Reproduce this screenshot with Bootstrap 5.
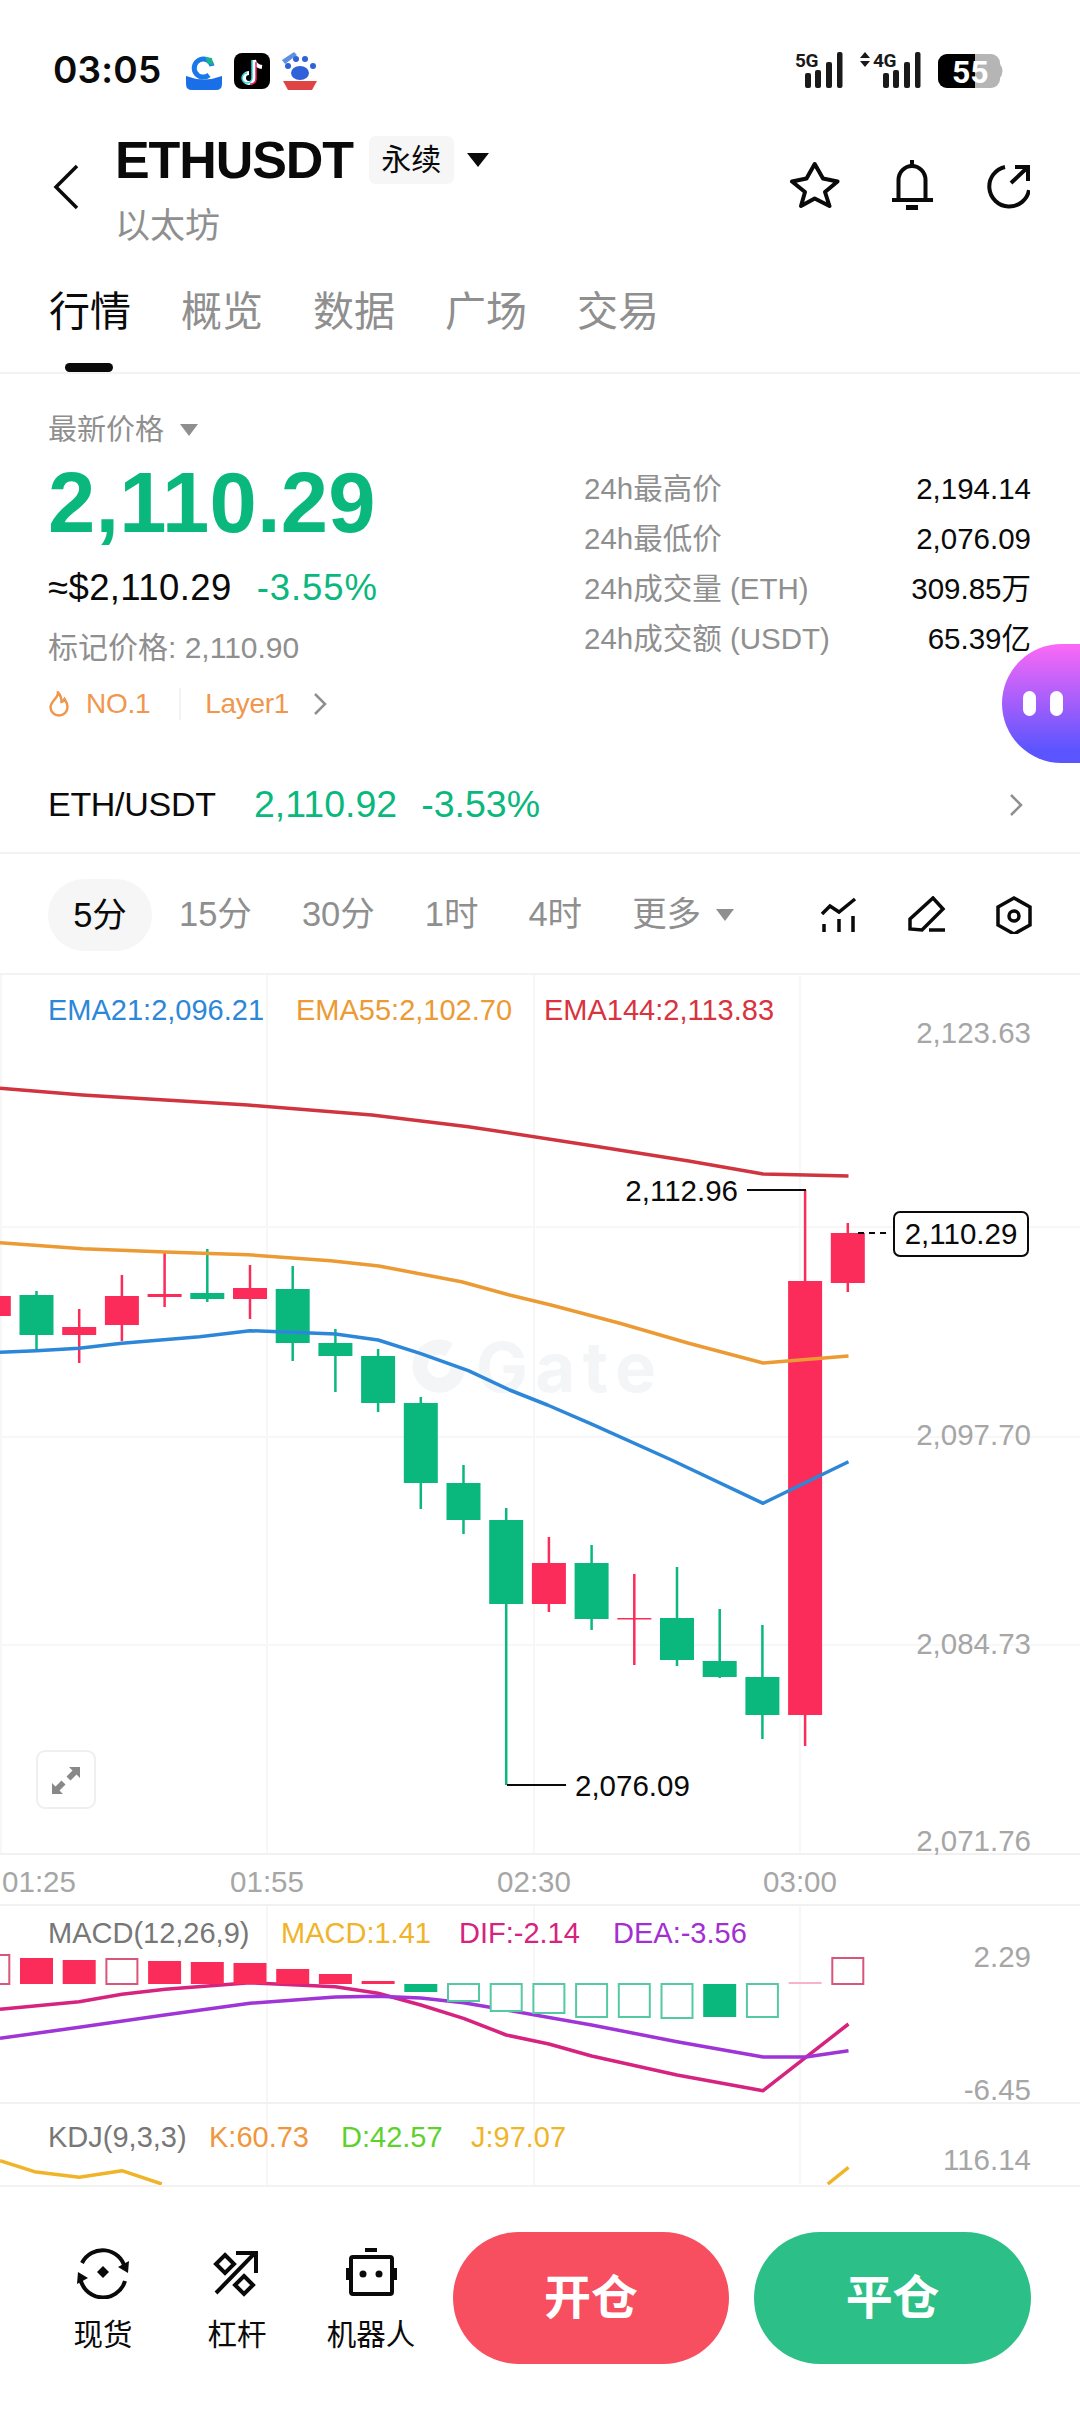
<!DOCTYPE html>
<html lang="en">
<head>
    <meta charset="UTF-8">
    <meta name="viewport" content="width=device-width, initial-scale=1.0">
    <title>ETHUSDT</title>
    <link rel="stylesheet" href="https://cdn.jsdelivr.net/npm/bootstrap@5.3.2/dist/css/bootstrap.min.css">
    <style>
        body { width: 1080px; height: 2412px; overflow: hidden; background: #fff; color: #0a0a0a; position: relative;
               font-family: "Liberation Sans", "Noto Sans CJK SC", sans-serif; }
        svg { display: block; flex: none; }
        .txt-gray { color: #8f8f8f; }
        .txt-green { color: #0ab87e; }

        .status-row { height: 115px; padding: 50px 65px 0 53px; }
        .clock { font: 600 37px/40px Inter, sans-serif; letter-spacing: .2px; width: 133px; }

        .head-row { height: 147px; padding: 0 50px 0 53px; }
        .back-col { width: 62px; padding-top: 49px; }
        .title-col { padding-top: 19px; }
        .pair { font: 700 52px/52px "Liberation Sans", sans-serif; letter-spacing: -1.1px; }
        .perp-tag { background: #f6f6f6; border-radius: 7px; width: 85px; height: 48px; font-size: 30px; line-height: 48px; text-align: center; margin: 0 13px 0 16px; }
        .coin-name { font-size: 35px; line-height: 44px; margin-top: 18px; }
        .head-icons { gap: 51px; padding-top: 45px; }

        .tab-row { height: 112px; gap: 50px; padding: 26px 0 0 49px; border-bottom: 2px solid #f3f3f3; position: relative; }
        .tab-item { font-size: 41px; line-height: 48px; color: #8f8f8f; }
        .tab-on { color: #0a0a0a; position: relative; }
        .tab-on::after { content: ""; position: absolute; left: 16px; top: 75px; width: 48px; height: 9px; border-radius: 5px; background: #0a0a0a; }

        .price-left { width: 584px; padding: 36px 0 0 48px; }
        .price-right { flex: 1; padding: 90px 49px 0 0; }
        .price-label { font-size: 29px; line-height: 40px; }
        .caret-down { width: 0; height: 0; border-left: 9px solid transparent; border-right: 9px solid transparent; border-top: 12px solid #8f8f8f; }
        .last-price { font: 700 85px/90px "Liberation Sans", sans-serif; letter-spacing: .2px; margin-top: 8px; color: #0ab87e; }
        .fiat-row { font-size: 36.500px; line-height: 40px; margin-top: 20px; gap: 25px; letter-spacing: .4px; }
        .fiat-row .txt-green { letter-spacing: .9px; }
        .mark-row { font-size: 30px; line-height: 40px; margin-top: 20px; }
        .tag-row { font-size: 28px; line-height: 40px; margin-top: 16px; color: #f0964d; letter-spacing: -.3px; }
        .tag-line { width: 2px; height: 32px; background: #f4f4f4; margin: 0 24px 0 29px; }
        .stat-row { height: 50px; font-size: 29.500px; line-height: 50px; }

        .spot-row { height: 130px; font-size: 34px; padding: 51px 49px 18px 48px; border-bottom: 2px solid #f3f3f3; letter-spacing: -.3px; }
        .spot-pair { width: 206px; }
        .spot-num { font-size: 37.500px; letter-spacing: 0; }
        .spot-pct { margin-left: 24px; }

        .tf-row { height: 121px; padding: 2px 48px 0; font-size: 34.500px; border-bottom: 2px solid #f3f3f3; gap: 50px; color: #8f8f8f; }
        .tf-on { background: #f6f6f6; color: #0a0a0a; width: 104px; height: 72px; border-radius: 36px; line-height: 72px; text-align: center; margin-right: -23px; }
        .tf-more { gap: 15px; }
        .tf-icons { gap: 50px; }

        #chart text { font-family: "Liberation Sans", sans-serif; font-size: 29px; }
        #chart .ax { fill: #a6a6a6; font-size: 29.500px; }
        #chart .blk { fill: #0a0a0a; font-size: 29.500px; }
        #chart .wm-text { font-family: Inter, sans-serif; font-size: 69px; font-weight: 700; letter-spacing: 7.500px; fill: #f4f5f6; }

        .bar-row { height: 227px; border-top: 2px solid #f3f3f3; padding: 0 49px 0 0; background: #fff; }
        .tool-list { width: 453px; height: 100%; gap: 34px; padding: 58px 0 0 53px; }
        .tool-cell { width: 100px; font-size: 29.500px; line-height: 36px; text-align: center; white-space: nowrap; }
        .tool-cell svg { margin: 0 auto 18px; }
        .act-btn { height: 132px; width: 277px; border-radius: 66px; color: #fff; font-size: 47px; font-weight: 700; line-height: 132px; text-align: center; margin-top: 45px; }
        .act-open { background: #f74e60; }
        .act-close { background: #2dbf88; margin-left: 25px; }

        .float-pet { position: absolute; left: 1002px; top: 644px; width: 78px; height: 119px; border-radius: 60px 0 0 60px / 60px 0 0 60px;
                     background: linear-gradient(180deg, #fb69f6, #5a55ff 90%); gap: 14px; padding-left: 21px; }
        .float-pet i { display: block; width: 13px; height: 25px; border-radius: 7px; background: #fff; }
    </style>
</head>
<body>
    <div class="status-row d-flex align-items-start">
        <div class="clock">03:05</div>
        <svg width="134" height="40" viewBox="186 50 134 40">
            <path d="M186 76q18 7 36 0v8q0 6-6 6h-24q-6 0-6-6z" fill="#1a6fe8"/>
            <path d="M212 66a9 9 0 1 0-3 9" fill="none" stroke="#1a78e8" stroke-width="5"/>
            <path d="M205 57l7 1 1 7-5-1z" fill="#19b38f"/>
            <rect x="234" y="53" width="36" height="36" rx="8" fill="#000"/>
            <path d="M254 60v18a5 5 0 1 1-5-5M254 60q1 6 8 7" fill="none" stroke="#fff" stroke-width="4"/>
            <path d="M252 60v18a5 5 0 1 1-5-5" fill="none" stroke="#25d8e6" stroke-width="1.500"/>
            <path d="M256 62v17a5 5 0 0 1-6 5" fill="none" stroke="#f5215c" stroke-width="1.500"/>
            <path d="M282 60l12-8 3 3-12 9z" fill="#5f8fe0"/>
            <circle cx="288" cy="66" r="3" fill="#2f62d8"/><circle cx="296" cy="59" r="3" fill="#2f62d8"/>
            <circle cx="305" cy="59" r="3" fill="#2f62d8"/><circle cx="313" cy="66" r="3" fill="#2f62d8"/>
            <ellipse cx="300" cy="73" rx="9" ry="7" fill="#2f62d8"/>
            <path d="M283 81h34l-5 9h-24z" fill="#e04545"/>
        </svg>
        <svg class="ms-auto" width="225" height="40" viewBox="790 50 225 40" fill="#1a1a1a">
            <text x="795" y="67" font-family="Roboto, sans-serif" font-weight="700" font-size="19" letter-spacing="-.5">5G</text>
            <rect x="805" y="73" width="6" height="15" rx="2"/><rect x="815" y="70" width="6" height="18" rx="2"/><rect x="826" y="62" width="6" height="26" rx="2"/><rect x="837" y="52" width="5.500" height="36" rx="2"/>
            <path d="M860 58l5-6 5 6zM860 61l5 6 5-6z"/>
            <text x="873" y="67" font-family="Roboto, sans-serif" font-weight="700" font-size="19" letter-spacing="-.5">4G</text>
            <rect x="883" y="73" width="6" height="15" rx="2"/><rect x="893" y="70" width="6" height="18" rx="2"/><rect x="904" y="62" width="6" height="26" rx="2"/><rect x="915" y="52" width="5.500" height="36" rx="2"/>
            <rect x="938" y="54" width="62" height="34" rx="9" fill="#b5b5b5"/>
            <path d="M947 54h28v34h-28a9 9 0 0 1-9-9v-16a9 9 0 0 1 9-9z" fill="#000"/>
            <path d="M1000 64q5 7 0 14z" fill="#b5b5b5"/>
            <text x="952" y="83" fill="#fff" font-family="Roboto, sans-serif" font-weight="700" font-size="32">55</text>
        </svg>
    </div>

    <div class="head-row d-flex">
        <div class="back-col">
            <svg width="26" height="46" viewBox="0 0 26 46"><path d="M24 2 3 23l21 21" fill="none" stroke="#0a0a0a" stroke-width="3.500"/></svg>
        </div>
        <div class="title-col">
            <div class="d-flex align-items-center">
                <span class="pair">ETHUSDT</span>
                <span class="perp-tag">永续</span>
                <svg width="22" height="14" viewBox="0 0 22 14"><path d="M0 0h22L11 14z" fill="#0a0a0a"/></svg>
            </div>
            <div class="coin-name txt-gray">以太坊</div>
        </div>
        <div class="head-icons d-flex ms-auto">
            <svg width="50" height="50" viewBox="0 0 50 50"><path d="M24.700 4l8.300 14.500 14.500 3L35 32l4.500 14-14.800-7.500L11 46l4-14L2 21.500l14.500-3z" fill="none" stroke="#0a0a0a" stroke-width="4" stroke-linejoin="round"/></svg>
            <svg width="42" height="50" viewBox="0 0 42 50" fill="none" stroke="#0a0a0a" stroke-width="4"><path d="M21 0v6"/><path d="M7.500 40V20a13.500 14 0 0 1 27 0v20"/><path d="M1 40h41"/><path d="M15 47.500h12" stroke-width="5"/></svg>
            <svg width="46" height="50" viewBox="0 0 46 50" fill="none" stroke="#0a0a0a" stroke-width="4"><path d="M21 7A20 20 0 1 0 45 30"/><path d="M27 23 44 7M31 7h13v14"/></svg>
        </div>
    </div>

    <div class="tab-row d-flex">
        <span class="tab-item tab-on">行情</span>
        <span class="tab-item">概览</span>
        <span class="tab-item">数据</span>
        <span class="tab-item">广场</span>
        <span class="tab-item">交易</span>
    </div>

    <div class="d-flex">
        <div class="price-left">
            <div class="price-label txt-gray d-flex align-items-center gap-2">最新价格 <span class="caret-down ms-2"></span></div>
            <div class="last-price">2,110.29</div>
            <div class="fiat-row d-flex"><span>≈$2,110.29</span><span class="txt-green">-3.55%</span></div>
            <div class="mark-row txt-gray">标记价格: 2,110.90</div>
            <div class="tag-row d-flex align-items-center">
                <svg class="me-3" width="22" height="26" viewBox="0 0 22 26" fill="none" stroke="#f0964d" stroke-width="2.500"><path d="M10 2c0 5-7 8-7.500 14 0 5 4 8.500 8.500 8.500s8.500-3.500 8.500-8.500c0-3-1-5-3-8-1 2-2 3-3 3 0-3-1-7-3.500-9.500z"/></svg>
                <span>NO.1</span>
                <span class="tag-line"></span>
                <span>Layer1</span>
                <svg class="ms-4" width="14" height="24" viewBox="0 0 14 24"><path d="M2 2l10 10L2 22" fill="none" stroke="#8f8f8f" stroke-width="2.500"/></svg>
            </div>
        </div>
        <div class="price-right">
            <div class="stat-row d-flex justify-content-between"><span class="txt-gray">24h最高价</span><span>2,194.14</span></div>
            <div class="stat-row d-flex justify-content-between"><span class="txt-gray">24h最低价</span><span>2,076.09</span></div>
            <div class="stat-row d-flex justify-content-between"><span class="txt-gray">24h成交量 (ETH)</span><span>309.85万</span></div>
            <div class="stat-row d-flex justify-content-between"><span class="txt-gray">24h成交额 (USDT)</span><span>65.39亿</span></div>
        </div>
    </div>

    <div class="spot-row d-flex align-items-center">
        <span class="spot-pair">ETH/USDT</span>
        <span class="txt-green spot-num">2,110.92</span>
        <span class="txt-green spot-num spot-pct">-3.53%</span>
        <svg class="ms-auto me-2" width="14" height="24" viewBox="0 0 14 24"><path d="M2 2l10 10L2 22" fill="none" stroke="#8f8f8f" stroke-width="2.500"/></svg>
    </div>

    <div class="tf-row d-flex align-items-center">
        <span class="tf-on">5分</span>
        <span>15分</span>
        <span>30分</span>
        <span>1时</span>
        <span>4时</span>
        <span class="tf-more d-flex align-items-center">更多 <span class="caret-down"></span></span>
        <div class="tf-icons d-flex ms-auto">
            <svg width="38" height="38" viewBox="821 895 38 38" fill="none" stroke="#0a0a0a" stroke-width="3.500"><path d="M823 913l8-8 9 6 16-13"/><path d="M825 923v8M840 918v13M854 915v16"/></svg>
            <svg width="38" height="38" viewBox="908 895 38 38" fill="none" stroke="#0a0a0a" stroke-width="3.500"><path d="M910 928v-10l23-21 10 11-21 21zM929 929h16"/></svg>
            <svg width="36" height="38" viewBox="996 895 36 38" fill="none" stroke="#0a0a0a" stroke-width="3.500"><path d="M1014 897l16 9v18l-16 9-16-9v-18z"/><circle cx="1014" cy="915" r="5"/></svg>
        </div>
    </div>

    <svg id="chart" width="1080" height="1210" viewBox="0 975 1080 1210">
        <g stroke="#f7f7f7" stroke-width="2" fill="none">
            <path d="M267 975V1854M534 975V1854M800 975V1854M1 975V1854"/>
            <path d="M0 1227H1080M0 1437H1080M0 1645H1080"/>
            <path d="M267 1906V2185M534 1906V2185M800 1906V2185"/>
        </g>
        <g stroke="#f1f1f1" stroke-width="2" fill="none"><path d="M0 1854H1080M0 1905H1080M0 2103H1080"/></g>

        <path d="M449 1350a19 19 0 1 0 9 17" fill="none" stroke="#f4f5f6" stroke-width="15"/>
        <text class="wm-text" x="476" y="1392">Gate</text>

        <g id="candles"></g>
        <g id="lines" fill="none" stroke-width="3.500" stroke-linejoin="round"></g>
        <g id="hist"></g>

        <g stroke="#0a0a0a" stroke-width="2" fill="none">
            <path d="M747 1190h59"/><path d="M507 1785h59"/><path d="M858 1233h32" stroke-dasharray="6 5"/>
        </g>
        <rect x="894" y="1212" width="134" height="44" rx="6" fill="#fff" stroke="#0a0a0a" stroke-width="2"/>
        <text class="blk" x="961" y="1244" text-anchor="middle">2,110.29</text>
        <text class="blk" x="738" y="1201" text-anchor="end">2,112.96</text>
        <text class="blk" x="575" y="1796">2,076.09</text>

        <text x="48" y="1020" fill="#2d87d9">EMA21:2,096.21</text>
        <text x="296" y="1020" fill="#ec9a33">EMA55:2,102.70</text>
        <text x="544" y="1020" fill="#d8333e">EMA144:2,113.83</text>
        <g text-anchor="end">
            <text class="ax" x="1031" y="1043">2,123.63</text>
            <text class="ax" x="1031" y="1445">2,097.70</text>
            <text class="ax" x="1031" y="1654">2,084.73</text>
            <text class="ax" x="1031" y="1851">2,071.76</text>
            <text class="ax" x="1031" y="1967">2.29</text>
            <text class="ax" x="1031" y="2100">-6.45</text>
            <text class="ax" x="1031" y="2170">116.14</text>
        </g>
        <g text-anchor="middle">
            <text class="ax" x="39" y="1892">01:25</text>
            <text class="ax" x="267" y="1892">01:55</text>
            <text class="ax" x="534" y="1892">02:30</text>
            <text class="ax" x="800" y="1892">03:00</text>
        </g>
        <rect x="37" y="1751" width="58" height="57" rx="8" fill="#fff" stroke="#efefef" stroke-width="2"/>
        <path d="M80 1767h-11l3.500 3.500-6 6 4 4 6-6 3.500 3.500zM52 1794h11l-3.500-3.500 6-6-4-4-6 6-3.500-3.500z" fill="#888"/>

        <text x="48" y="1943" fill="#777">MACD(12,26,9)</text>
        <text x="281" y="1943" fill="#f0b429">MACD:1.41</text>
        <text x="459" y="1943" fill="#d6237f">DIF:-2.14</text>
        <text x="613" y="1943" fill="#a32fd2">DEA:-3.56</text>
        <text x="48" y="2147" fill="#777">KDJ(9,3,3)</text>
        <text x="209" y="2147" fill="#f0963c">K:60.73</text>
        <text x="341" y="2147" fill="#5ed12f">D:42.57</text>
        <text x="471" y="2147" fill="#f0b429">J:97.07</text>
    </svg>

    <div class="float-pet d-flex align-items-center"><i></i><i></i></div>

    <div class="bar-row d-flex">
        <div class="tool-list d-flex">
            <div class="tool-cell">
                <svg width="54" height="54" viewBox="76 2243 54 54" fill="none" stroke="#0a0a0a" stroke-width="4">
                    <path d="M82 2261a23 23 0 0 1 43 5"/><path d="M125 2279a23 23 0 0 1-45-5"/>
                    <path d="M118 2265l10 6 1-12zM88 2276l-10-6-1 12z" fill="#0a0a0a" stroke="none"/>
                    <path d="M103 2264l6 6-6 6-6-6z" fill="#0a0a0a" stroke="none"/>
                </svg>
                现货
            </div>
            <div class="tool-cell">
                <svg width="54" height="54" viewBox="211 2243 54 54" fill="none" stroke="#0a0a0a" stroke-width="4">
                    <path d="M217 2291l39-40M237 2251h20v20"/>
                    <path d="M226 2253l9 9-9 9-9-9zM245 2274l9 9-9 9-9-9z"/>
                </svg>
                杠杆
            </div>
            <div class="tool-cell">
                <svg width="54" height="54" viewBox="346 2243 54 54" fill="#0a0a0a">
                    <rect x="367" y="2246" width="12" height="4"/>
                    <rect x="353" y="2255" width="41" height="37" rx="2" fill="none" stroke="#0a0a0a" stroke-width="4"/>
                    <rect x="348" y="2266" width="3" height="12"/><rect x="396" y="2266" width="3" height="12"/>
                    <circle cx="365" cy="2272" r="3.500"/><circle cx="381" cy="2272" r="3.500"/>
                </svg>
                机器人
            </div>
        </div>
        <div class="act-btn act-open">开仓</div>
        <div class="act-btn act-close">平仓</div>
    </div>

    <script src="https://cdn.jsdelivr.net/npm/bootstrap@5.3.2/dist/js/bootstrap.bundle.min.js"></script>
    <script>
        const GREEN = '#0ab87e', RED = '#fb2c5a', STEP = 42.7, FIRST = 36.5;
        const SVGNS = 'http://www.w3.org/2000/svg';
        const cx = i => FIRST + i * STEP;

        function add(parent, tag, attrs) {
            const el = document.createElementNS(SVGNS, tag);
            for (const k in attrs) el.setAttribute(k, attrs[k]);
            document.getElementById(parent).appendChild(el);
        }

        // colour, wick top, body top, body bottom, wick bottom
        const candles = [
            ['r', 1290, 1296, 1316, 1320],
            ['g', 1291, 1295, 1335, 1351], ['r', 1309, 1327, 1335, 1363], ['r', 1275, 1296, 1325, 1341],
            ['r', 1251, 1294, 1297, 1307], ['g', 1249, 1293, 1299, 1302], ['r', 1265, 1288, 1299, 1319],
            ['g', 1266, 1289, 1343, 1361], ['g', 1329, 1343, 1356, 1392], ['g', 1349, 1356, 1403, 1412],
            ['g', 1397, 1403, 1483, 1509], ['g', 1465, 1483, 1520, 1534], ['g', 1508, 1520, 1604, 1785],
            ['r', 1537, 1563, 1604, 1612], ['g', 1545, 1563, 1619, 1630], ['r', 1574, 1618, 1619.500, 1665],
            ['g', 1567, 1618, 1660, 1666], ['g', 1609, 1661, 1677, 1678], ['g', 1625, 1677, 1715, 1739],
            ['r', 1190, 1281, 1715, 1746], ['r', 1223, 1233, 1283, 1292]
        ];
        candles.forEach((c, n) => {
            const x = cx(n - 1), col = c[0] === 'g' ? GREEN : RED;
            add('candles', 'rect', { x: x - 1.25, y: c[1], width: 2.5, height: c[4] - c[1], fill: col });
            add('candles', 'rect', { x: x - 17, y: c[2], width: 34, height: c[3] - c[2], fill: col });
        });

        const poly = pts => pts.map(p => (p[0] / 1.452).toFixed(1) + ',' + p[1].toFixed(1)).join(' ');
        const z3 = a => a.map(p => [p[0], 960 + p[1] / 3]);
        const z5 = a => a.map(p => [p[0], 1900 + p[1] / 3]);
        const lines = [
            ['#d0343f', z3([[0,385],[120,405],[240,420],[360,435],[540,465],[680,500],[860,557],[1000,603],[1108,642],[1232,648]])],
            ['#ec9a33', z3([[0,848],[120,866],[240,876],[360,884],[480,902],[550,918],[670,965],[740,1005],[800,1035],[900,1090],[1000,1150],[1108,1209],[1232,1188]])],
            ['#2d87d9', z3([[0,1177],[53,1172],[115,1165],[177,1150],[290,1130],[363,1112],[487,1122],[549,1140],[610,1180],[680,1232],[740,1290],[795,1335],[860,1393],[975,1500],[1108,1630],[1232,1505]])],
            ['#d6237f', z5([[0,328],[115,305],[177,283],[240,268],[363,248],[487,260],[549,280],[611,315],[673,355],[735,405],[797,432],[859,468],[983,525],[1108,572],[1232,372]])],
            ['#9f35d6', z5([[0,415],[115,382],[239,345],[363,310],[487,291],[549,289],[611,294],[673,308],[735,330],[859,375],[983,425],[1108,471],[1170,471],[1232,452]])],
            ['#f0b429', z5([[0,782],[50,815],[115,832],[177,812],[235,852]])],
            ['#f0b429', z5([[1202,852],[1232,802]])]
        ];
        lines.forEach(l => add('lines', 'polyline', { points: poly(l[1]), stroke: l[0] }));

        // macd bars: y end relative to the zero line, filled or hollow
        const ZERO = 1984;
        const bars = [
            [1955, 0], [1958, 1], [1960, 1], [1959, 0], [1961, 1], [1962, 1], [1963, 1], [1969, 1], [1974, 1], [1981, 1],
            [1992, 1], [2001, 0], [2011, 0], [2013, 0], [2017, 0], [2017, 0], [2018, 0], [2017, 1], [2017, 0], [1982, 2], [1958, 0]
        ];
        bars.forEach((b, n) => {
            const x = cx(n - 1), up = b[0] < ZERO, col = up ? RED : GREEN;
            const y = Math.min(b[0], ZERO), h = Math.abs(b[0] - ZERO);
            if (b[1] === 1) add('hist', 'rect', { x: x - 16.5, y, width: 33, height: h, fill: col });
            else if (b[1] === 2) add('hist', 'rect', { x: x - 16.5, y, width: 33, height: h, fill: '#f7b4c6' });
            else add('hist', 'rect', { x: x - 15.5, y, width: 31, height: h, fill: '#fff', stroke: up ? '#d9567a' : '#55c9a4', 'stroke-width': 2 });
        });
    </script>
</body>
</html>
